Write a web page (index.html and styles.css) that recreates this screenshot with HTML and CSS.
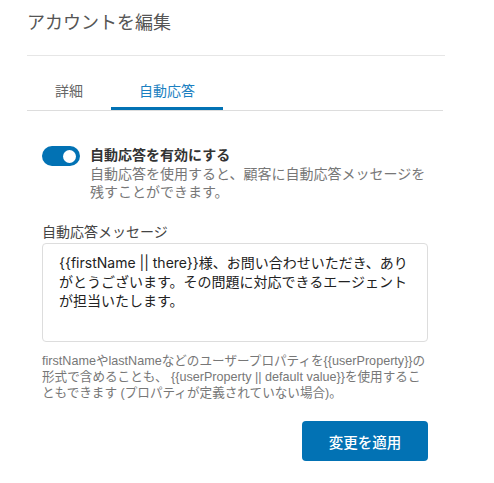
FILE: index.html
```html
<!doctype html>
<html lang="ja">
  <head>
    <meta charset="UTF-8" />
    <meta name="viewport" content="width=device-width, initial-scale=1.0" />
    <title>アカウントを編集</title>
    <link rel="stylesheet" href="styles.css">
  </head>
  <body>
    <div class="panel">
      <header class="panel-header">
        <h1>アカウントを編集</h1>
      </header>

      <nav class="tabs">
        <a class="tab">詳細</a>
        <a class="tab active">自動応答</a>
      </nav>

      <div class="form">
        <div class="switch-row">
          <span class="switch on"><span class="knob"></span></span>
          <div class="switch-text">
            <div class="switch-title">自動応答を有効にする</div>
            <div class="switch-desc">自動応答を使用すると、顧客に自動応答メッセージを残すことができます。</div>
          </div>
        </div>

        <label class="field-label">自動応答メッセージ</label>
        <div class="textarea">{{firstName || there}}様、お問い合わせいただき、ありがとうございます。その問題に対応できるエージェントが担当いたします。</div>
        <p class="hint">firstNameやlastNameなどのユーザープロパティを{{userProperty}}の形式で含めることも、 {{userProperty || default value}}を使用することもできます (プロパティが定義されていない場合)。</p>

        <div class="actions">
          <button class="btn-primary">変更を適用</button>
        </div>
      </div>
    </div>
  </body>
</html>
```

FILE: styles.css
```css
* {
  margin: 0;
  padding: 0;
  box-sizing: border-box;
}

body {
  font-family: Inter, "Noto Sans CJK JP", sans-serif;
  background: #fff;
  color: #333;
}

.panel {
  width: 418px;
  margin-left: 27px;
}

.panel-header {
  height: 56px;
  padding-top: 10px;
  border-bottom: 1px solid #e6e6e6;
}

h1 {
  font-size: 18px;
  font-weight: normal;
  line-height: 26px;
  color: #555;
}

.tabs {
  display: flex;
  margin-top: 19px;
  width: 416px;
  border-bottom: 1px solid #ddd;
}

.tab {
  font-size: 14px;
  line-height: 20px;
  padding: 6px 28px;
  color: #666;
  border-bottom: 3px solid transparent;
}

.tab.active {
  color: #1a7fc1;
  border-bottom-color: #0272b4;
}

.form {
  padding: 34px 17px 0 15px;
}

.switch-row {
  display: flex;
  gap: 10px;
}

.switch {
  flex: none;
  width: 38px;
  height: 20px;
  margin-top: 1px;
  border-radius: 10px;
  background: #0272b4;
  display: flex;
  align-items: center;
  justify-content: flex-end;
  padding-right: 4px;
}

.knob {
  width: 13px;
  height: 13px;
  border-radius: 50%;
  background: #fff;
}

.switch-title {
  font-size: 14px;
  font-weight: bold;
  line-height: 20px;
  color: #333;
}

.switch-desc {
  font-size: 14px;
  line-height: 18px;
  color: #777;
}

.field-label {
  display: block;
  margin-top: 21px;
  font-size: 14px;
  line-height: 20px;
  color: #444;
}

.textarea {
  margin-top: 1px;
  height: 99px;
  border: 1px solid #ddd;
  border-radius: 4px;
  padding: 9px 16px;
  font-size: 14px;
  line-height: 19px;
  color: #222;
}

.hint {
  margin-top: 11px;
  font-family: "Liberation Sans", "Noto Sans CJK JP", sans-serif;
  font-size: 12.6px;
  line-height: 16px;
  color: #777;
}

.actions {
  display: flex;
  justify-content: flex-end;
  margin-top: 20px;
}

.btn-primary {
  width: 126px;
  height: 40px;
  border: none;
  border-radius: 4px;
  background: #0272b4;
  color: #fff;
  font-family: inherit;
  font-size: 14.5px;
  font-weight: 500;
}
```
